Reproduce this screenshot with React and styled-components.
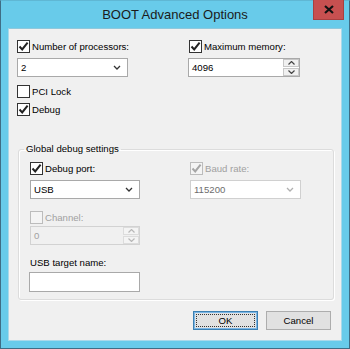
import React from "react";
import styled, { createGlobalStyle } from "styled-components";

const Global = createGlobalStyle`
  * { box-sizing: border-box; }
  html, body { margin: 0; padding: 0; background: #ffffff; }
  body { font-family: "Liberation Sans", Arial, sans-serif; font-size: 9.6px; color: #000; }
`;

const Window = styled.div`
  width: 350px;
  height: 349px;
  background: #68cbea;
  border: 1px solid #3f6d85;
  border-top-color: #5fb7d4;
  display: flex;
  flex-direction: column;
  padding: 0 7px 7px 7px;
`;

const TitleBar = styled.div`
  height: 27px;
  display: grid;
  grid-template-columns: 1fr auto 1fr;
  align-items: start;
  flex-shrink: 0;
`;

const Title = styled.div`
  grid-column: 2;
  font-size: 13px;
  line-height: 18px;
  padding-top: 5px;
  color: #1b1b1b;
  white-space: nowrap;
`;

const CloseButton = styled.div`
  grid-column: 3;
  justify-self: end;
  width: 31px;
  height: 20px;
  margin-right: -2px;
  margin-top: -1px;
  background: #c75050;
  border: 1px solid #a94040;
  border-top: none;
  display: flex;
  align-items: center;
  justify-content: center;
`;

const Client = styled.div`
  flex: 1;
  background: #f0f0f0;
  border: 1px solid #a9d9ea;
  border-top-color: #8fc8dc;
  padding: 10px 9px 8px 8px;
  display: flex;
  flex-direction: column;
`;

const TopGrid = styled.div`
  display: grid;
  grid-template-columns: 111px 112px;
  column-gap: 60px;
  align-items: start;
`;

const Column = styled.div`
  display: flex;
  flex-direction: column;
`;

const CheckRow = styled.label`
  display: flex;
  align-items: center;
  height: 15px;
  gap: 2px;
  margin-top: ${(p) => p.$mt || 0}px;
  color: ${(p) => (p.$disabled ? "#a0a0a0" : "#000")};
  white-space: nowrap;
  padding-left: ${(p) => p.$pl || 0}px;
`;

const Box = styled.span`
  width: 13px;
  height: 13px;
  flex-shrink: 0;
  border: 1px solid ${(p) => (p.$disabled ? "#bcbcbc" : "#333333")};
  background: ${(p) => (p.$disabled ? "#f4f4f4" : "#ffffff")};
  display: flex;
  align-items: center;
  justify-content: center;
`;

const Combo = styled.div`
  height: 19px;
  margin-top: ${(p) => p.$mt || 0}px;
  width: ${(p) => p.$w}px;
  background: #ffffff;
  border: 1px solid ${(p) => (p.$disabled ? "#d0d0d0" : "#a9a9a9")};
  display: flex;
  align-items: center;
  padding-left: 3px;
  padding-right: 6px;
  color: ${(p) => (p.$disabled ? "#6d6d6d" : "#000")};
  line-height: 15px;
`;

const ComboText = styled.span`
  flex: 1;
`;

const Spin = styled.div`
  height: 19px;
  margin-top: ${(p) => p.$mt || 0}px;
  width: ${(p) => p.$w}px;
  background: ${(p) => (p.$disabled ? "#f0f0f0" : "#ffffff")};
  border: 1px solid ${(p) => (p.$disabled ? "#d2d2d2" : "#a9a9a9")};
  display: flex;
  align-items: stretch;
  color: ${(p) => (p.$disabled ? "#a0a0a0" : "#000")};
`;

const SpinText = styled.span`
  flex: 1;
  padding-left: 3px;
  line-height: 17px;
`;

const SpinButtons = styled.div`
  width: 16px;
  display: flex;
  flex-direction: column;
  gap: 1px;
  padding: 0;
`;

const SpinBtn = styled.div`
  flex: 1;
  background: ${(p) => (p.$disabled ? "#f4f4f4" : "#f0f0f0")};
  border: 1px solid ${(p) => (p.$disabled ? "#dcdcdc" : "#c7c7c7")};
  display: flex;
  align-items: center;
  justify-content: center;
`;

const Group = styled.fieldset`
  margin: 24px 0 0 1px;
  padding: 0;
  width: 316px;
  border: 1px solid #dcdcdc;
  border-radius: 3px;
  box-shadow: inset 1px 1px 0 #ffffff, 1px 1px 0 #ffffff;
`;

const Legend = styled.legend`
  margin-left: 5px;
  padding: 0 2px;
  line-height: 16px;
  color: #000;
`;

const GroupBody = styled.div`
  padding: 4px 11px 7px 11px;
  display: grid;
  grid-template-columns: 110px 111px;
  column-gap: 50px;
  align-items: start;
`;

const FieldLabel = styled.div`
  line-height: 15px;
  margin-top: ${(p) => p.$mt || 0}px;
  white-space: nowrap;
`;

const TextInput = styled.div`
  height: 20px;
  width: 111px;
  margin-top: 2px;
  margin-left: -1px;
  background: #ffffff;
  border: 1px solid #a9a9a9;
`;

const Footer = styled.div`
  display: flex;
  justify-content: flex-end;
  gap: 8px;
  margin-top: 11px;
  padding-right: 1px;
`;

const Button = styled.div`
  width: 65px;
  height: 19px;
  background: #e1e1e1;
  border: 1px solid ${(p) => (p.$default ? "#3c7fb1" : "#adadad")};
  box-shadow: ${(p) => (p.$default ? "inset 0 0 0 1px #7ab6e6" : "none")};
  display: flex;
  align-items: center;
  justify-content: center;
  padding: 2px;
`;

const Focus = styled.div`
  flex: 1;
  align-self: stretch;
  display: flex;
  align-items: center;
  justify-content: center;
  border: 1px dotted ${(p) => (p.$on ? "#333" : "transparent")};
  line-height: 13px;
`;

const Check = ({ disabled }) => (
  <svg width="11" height="11" viewBox="0 0 11 11">
    <path
      d="M1.5 5.5 L4.2 8.4 L9.6 1.6"
      fill="none"
      stroke={disabled ? "#a6a6a6" : "#222"}
      strokeWidth="2"
    />
  </svg>
);

const Chevron = ({ disabled }) => (
  <svg width="8" height="5" viewBox="0 0 8 5">
    <path
      d="M1 1 L4 4 L7 1"
      fill="none"
      stroke={disabled ? "#b0b0b0" : "#333"}
      strokeWidth="1.3"
    />
  </svg>
);

const Arrow = ({ up, disabled }) => (
  <svg width="7" height="4" viewBox="0 0 7 4">
    <path
      d={up ? "M0.5 3.5 L3.5 0.5 L6.5 3.5" : "M0.5 0.5 L3.5 3.5 L6.5 0.5"}
      fill="none"
      stroke={disabled ? "#b8b8b8" : "#444"}
      strokeWidth="1.2"
    />
  </svg>
);

const CheckBox = ({ checked, disabled, label, mt, pl }) => (
  <CheckRow $mt={mt} $pl={pl} $disabled={disabled}>
    <Box $disabled={disabled}>{checked && <Check disabled={disabled} />}</Box>
    {label}
  </CheckRow>
);

const ComboBox = ({ value, w, mt, disabled }) => (
  <Combo $w={w} $mt={mt} $disabled={disabled}>
    <ComboText>{value}</ComboText>
    <Chevron disabled={disabled} />
  </Combo>
);

const SpinBox = ({ value, w, mt, disabled }) => (
  <Spin $w={w} $mt={mt} $disabled={disabled}>
    <SpinText>{value}</SpinText>
    <SpinButtons>
      <SpinBtn $disabled={disabled}>
        <Arrow up disabled={disabled} />
      </SpinBtn>
      <SpinBtn $disabled={disabled}>
        <Arrow disabled={disabled} />
      </SpinBtn>
    </SpinButtons>
  </Spin>
);

export default function App() {
  return (
    <>
      <Global />
      <Window>
        <TitleBar>
          <Title>BOOT Advanced Options</Title>
          <CloseButton>
            <svg width="10" height="9" viewBox="0 0 10 9">
              <path d="M1 1 L9 8 M9 1 L1 8" stroke="#111" strokeWidth="2.2" />
            </svg>
          </CloseButton>
        </TitleBar>
        <Client>
          <TopGrid>
            <Column>
              <CheckBox checked label="Number of processors:" />
              <ComboBox value="2" w={111} mt={4} />
              <CheckBox label="PCI Lock" mt={7} />
              <CheckBox checked label="Debug" mt={3} />
            </Column>
            <Column>
              <CheckBox checked label="Maximum memory:" pl={1} />
              <SpinBox value="4096" w={112} mt={4} />
            </Column>
          </TopGrid>
          <Group>
            <Legend>Global debug settings</Legend>
            <GroupBody>
              <Column>
                <CheckBox checked label="Debug port:" />
                <ComboBox value="USB" w={110} mt={4} />
                <CheckBox disabled label="Channel:" mt={11} />
                <SpinBox disabled value="0" w={110} mt={1} />
                <FieldLabel $mt={10}>USB target name:</FieldLabel>
                <TextInput />
              </Column>
              <Column>
                <CheckBox checked disabled label="Baud rate:" />
                <ComboBox disabled value="115200" w={111} mt={4} />
              </Column>
            </GroupBody>
          </Group>
          <Footer>
            <Button $default>
              <Focus $on>OK</Focus>
            </Button>
            <Button>
              <Focus>Cancel</Focus>
            </Button>
          </Footer>
        </Client>
      </Window>
    </>
  );
}
